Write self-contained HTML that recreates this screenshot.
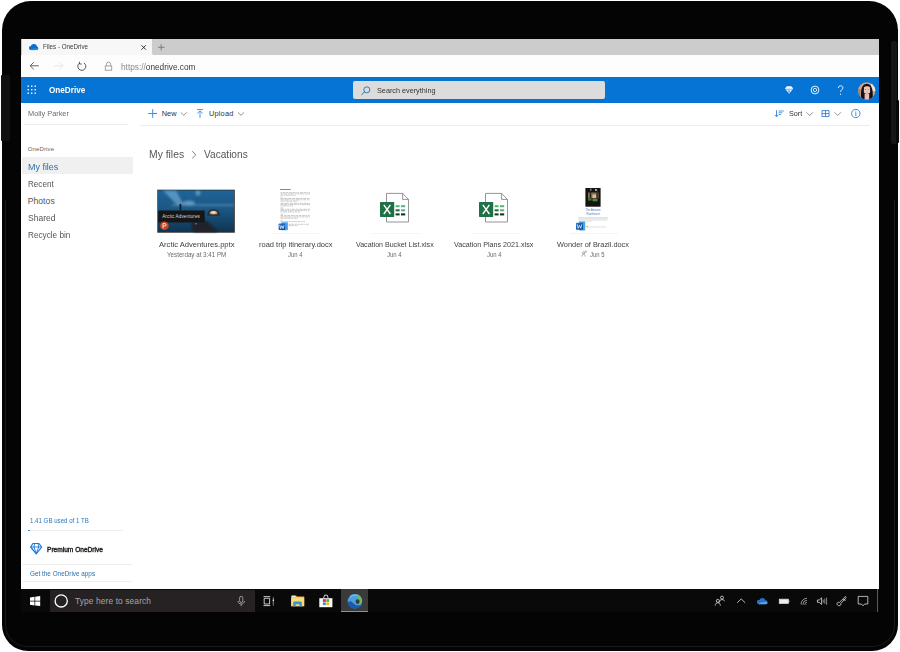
<!DOCTYPE html>
<html><head><meta charset="utf-8"><title>OneDrive</title>
<style>
html,body{margin:0;padding:0;width:900px;height:652px;overflow:hidden;background:#fff;}
body{position:relative;font-family:"Liberation Sans",sans-serif;}
.a{position:absolute;}
.t{position:absolute;white-space:nowrap;font-family:"Liberation Sans",sans-serif;}
svg{position:absolute;overflow:visible;}
</style></head><body>
<!-- device frame -->
<div class="a" style="left:2px;top:1px;width:896px;height:650px;background:#040404;border-radius:29px 29px 26px 26px;"></div>
<div class="a" style="left:5px;top:200px;width:888px;height:446px;border:1px solid #1a1a1a;border-top:none;border-radius:0 0 22px 22px;"></div>
<div class="a" style="left:891px;top:41px;width:6px;height:103px;background:#161616;border-radius:2px;"></div>
<div class="a" style="left:896px;top:100px;width:3px;height:43px;background:#080808;border-radius:1px;"></div>
<div class="a" style="left:1px;top:75px;width:9px;height:66px;background:#0f0f0f;border-radius:1px;"></div>

<!-- screen -->
<div class="a" style="left:21px;top:39px;width:858px;height:550px;background:#fff;"></div>
<!-- tab strip -->
<div class="a" style="left:21px;top:39px;width:858px;height:16px;background:#f7f7f7;"></div>
<div class="a" style="left:152px;top:39px;width:727px;height:16px;background:#cccccc;border-bottom-left-radius:2px;"></div>
<div class="a" style="left:21px;top:39px;width:1px;height:16px;background:#c4c4c4;"></div>
<!-- address row -->
<div class="a" style="left:21px;top:55px;width:858px;height:22px;background:#fdfdfd;"></div>
<!-- header -->
<div class="a" style="left:21px;top:77px;width:858px;height:25.5px;background:#0574d4;"></div>
<!-- search box -->
<div class="a" style="left:353px;top:81px;width:252px;height:18px;background:#dcdcdc;border-radius:2px;"></div>

<!-- nav highlight -->
<div class="a" style="left:22px;top:157px;width:111px;height:17px;background:#f0f0f0;"></div>
<!-- dividers -->
<div class="a" style="left:24px;top:124px;width:104px;height:1px;background:#ececec;"></div>
<div class="a" style="left:140px;top:125px;width:730px;height:1px;background:#eeeeee;"></div>
<div class="a" style="left:28px;top:530px;width:95px;height:1px;background:#eeeeee;"></div>
<div class="a" style="left:28px;top:530px;width:2px;height:1px;background:#3a86d0;"></div>
<div class="a" style="left:22px;top:564px;width:110px;height:1px;background:#efefef;"></div>
<div class="a" style="left:22px;top:581px;width:110px;height:1px;background:#efefef;"></div>

<!-- taskbar -->
<div class="a" style="left:21px;top:589px;width:858px;height:23px;background:#090909;"></div>
<div class="a" style="left:50px;top:590px;width:205px;height:22px;background:#262223;"></div>
<div class="a" style="left:341px;top:589px;width:27px;height:23px;background:#3a3a3a;"></div>
<div class="a" style="left:341px;top:611px;width:27px;height:1px;background:#4aa3e6;"></div>
<div class="a" style="left:877px;top:589px;width:1px;height:23px;background:#5a5a5a;"></div>

<!-- faint thumbnail base lines -->
<div class="a" style="left:272px;top:233px;width:48px;height:1px;background:#f4f4f4;"></div>
<div class="a" style="left:372px;top:233px;width:48px;height:1px;background:#f4f4f4;"></div>
<div class="a" style="left:471px;top:233px;width:48px;height:1px;background:#f4f4f4;"></div>
<div class="a" style="left:570px;top:233px;width:48px;height:1px;background:#f4f4f4;"></div>
<div class='t' style='left:43.00px;top:44.24px;font-size:6.8px;line-height:6.8px;color:#3a3a3a;font-weight:400;letter-spacing:0.000px;transform:scaleX(0.9163);transform-origin:0 0;'>Files - OneDrive</div>
<div class='t' style='left:120.60px;top:62.92px;font-size:8.6px;line-height:8.6px;color:#3a3a3a;font-weight:400;letter-spacing:0.000px;transform:scaleX(0.9614);transform-origin:0 0;'><span style='color:#8a8a8a'>https://</span>onedrive.com</div>
<div class='t' style='left:49.40px;top:86.19px;font-size:8.4px;line-height:8.4px;color:#ffffff;font-weight:700;letter-spacing:0.000px;transform:scaleX(0.9745);transform-origin:0 0;'>OneDrive</div>
<div class='t' style='left:377.00px;top:87.12px;font-size:7.3px;line-height:7.3px;color:#333;font-weight:400;letter-spacing:0.000px;transform:scaleX(0.9944);transform-origin:0 0;'>Search everything</div>
<div class='t' style='left:27.70px;top:110.40px;font-size:7.8px;line-height:7.8px;color:#6b6b6b;font-weight:400;letter-spacing:0.000px;transform:scaleX(0.9440);transform-origin:0 0;'>Molly Parker</div>
<div class='t' style='left:161.70px;top:110.34px;font-size:7.4px;line-height:7.4px;color:#333;font-weight:400;letter-spacing:0.052px;'>New</div>
<div class='t' style='left:209.00px;top:110.34px;font-size:7.4px;line-height:7.4px;color:#333;font-weight:400;letter-spacing:0.176px;'>Upload</div>
<div class='t' style='left:788.50px;top:110.44px;font-size:7.4px;line-height:7.4px;color:#333;font-weight:400;letter-spacing:0.000px;transform:scaleX(0.9733);transform-origin:0 0;'>Sort</div>
<div class='t' style='left:27.70px;top:146.12px;font-size:6.0px;line-height:6.0px;color:#666;font-weight:400;letter-spacing:0.137px;'>OneDrive</div>
<div class='t' style='left:27.70px;top:162.68px;font-size:9.0px;line-height:9.0px;color:#2a6fae;font-weight:400;letter-spacing:0.000px;transform:scaleX(0.9929);transform-origin:0 0;'>My files</div>
<div class='t' style='left:27.70px;top:179.72px;font-size:8.6px;line-height:8.6px;color:#555;font-weight:400;letter-spacing:0.000px;transform:scaleX(0.9437);transform-origin:0 0;'>Recent</div>
<div class='t' style='left:27.70px;top:197.02px;font-size:8.6px;line-height:8.6px;color:#555;font-weight:400;letter-spacing:0.047px;'>Photos</div>
<div class='t' style='left:27.70px;top:214.12px;font-size:8.6px;line-height:8.6px;color:#555;font-weight:400;letter-spacing:0.000px;transform:scaleX(0.9921);transform-origin:0 0;'>Shared</div>
<div class='t' style='left:27.70px;top:231.42px;font-size:8.6px;line-height:8.6px;color:#555;font-weight:400;letter-spacing:0.000px;transform:scaleX(0.9522);transform-origin:0 0;'>Recycle bin</div>
<div class='t' style='left:148.70px;top:149.36px;font-size:10.8px;line-height:10.8px;color:#565656;font-weight:400;letter-spacing:0.000px;transform:scaleX(0.9592);transform-origin:0 0;'>My files</div>
<div class='t' style='left:204.00px;top:149.36px;font-size:10.8px;line-height:10.8px;color:#565656;font-weight:400;letter-spacing:0.000px;transform:scaleX(0.9373);transform-origin:0 0;'>Vacations</div>
<div class='t' style='left:158.50px;top:241.20px;font-size:7.8px;line-height:7.8px;color:#404040;font-weight:400;letter-spacing:0.000px;transform:scaleX(0.9732);transform-origin:0 0;'>Arctic Adventures.pptx</div>
<div class='t' style='left:258.50px;top:241.20px;font-size:7.8px;line-height:7.8px;color:#404040;font-weight:400;letter-spacing:0.000px;transform:scaleX(0.9600);transform-origin:0 0;'>road trip itinerary.docx</div>
<div class='t' style='left:355.60px;top:240.60px;font-size:7.8px;line-height:7.8px;color:#404040;font-weight:400;letter-spacing:0.000px;transform:scaleX(0.9069);transform-origin:0 0;'>Vacation Bucket List.xlsx</div>
<div class='t' style='left:453.90px;top:240.60px;font-size:7.8px;line-height:7.8px;color:#404040;font-weight:400;letter-spacing:0.000px;transform:scaleX(0.9163);transform-origin:0 0;'>Vacation Plans 2021.xlsx</div>
<div class='t' style='left:557.00px;top:240.60px;font-size:7.8px;line-height:7.8px;color:#404040;font-weight:400;letter-spacing:0.000px;transform:scaleX(0.9456);transform-origin:0 0;'>Wonder of Brazil.docx</div>
<div class='t' style='left:166.70px;top:252.17px;font-size:6.3px;line-height:6.3px;color:#6a6a6a;font-weight:400;letter-spacing:0.000px;transform:scaleX(0.9886);transform-origin:0 0;'>Yesterday at 3:41 PM</div>
<div class='t' style='left:287.80px;top:251.97px;font-size:6.3px;line-height:6.3px;color:#6a6a6a;font-weight:400;letter-spacing:0.000px;transform:scaleX(0.9412);transform-origin:0 0;'>Jun 4</div>
<div class='t' style='left:387.20px;top:251.77px;font-size:6.3px;line-height:6.3px;color:#6a6a6a;font-weight:400;letter-spacing:0.000px;transform:scaleX(0.9412);transform-origin:0 0;'>Jun 4</div>
<div class='t' style='left:486.50px;top:251.77px;font-size:6.3px;line-height:6.3px;color:#6a6a6a;font-weight:400;letter-spacing:0.000px;transform:scaleX(0.9412);transform-origin:0 0;'>Jun 4</div>
<div class='t' style='left:589.50px;top:251.77px;font-size:6.3px;line-height:6.3px;color:#6a6a6a;font-weight:400;letter-spacing:0.000px;transform:scaleX(0.9412);transform-origin:0 0;'>Jun 5</div>
<div class='t' style='left:30.20px;top:517.81px;font-size:6.6px;line-height:6.6px;color:#2a78c2;font-weight:400;letter-spacing:0.000px;transform:scaleX(0.9290);transform-origin:0 0;'>1.41 GB used of 1 TB</div>
<div class='t' style='left:47.00px;top:546.27px;font-size:7.0px;line-height:7.0px;color:#222;font-weight:400;letter-spacing:0.000px;-webkit-text-stroke:0.4px #222;transform:scaleX(0.9392);transform-origin:0 0;'>Premium OneDrive</div>
<div class='t' style='left:29.70px;top:570.66px;font-size:6.9px;line-height:6.9px;color:#2a6fae;font-weight:400;letter-spacing:0.000px;transform:scaleX(0.9236);transform-origin:0 0;'>Get the OneDrive apps</div>
<div class='t' style='left:75.00px;top:596.79px;font-size:8.4px;line-height:8.4px;color:#a6a6a6;font-weight:400;letter-spacing:0.109px;'>Type here to search</div>
<svg width="900" height="652" viewBox="0 0 900 652" style="left:0;top:0">
<defs>
 <linearGradient id="sky" x1="0" y1="0" x2="0" y2="1">
  <stop offset="0" stop-color="#1f6396"/><stop offset="0.45" stop-color="#1b5784"/><stop offset="1" stop-color="#0f3552"/>
 </linearGradient>
 <radialGradient id="tent" cx="0.5" cy="0.5" r="0.5">
  <stop offset="0" stop-color="#fbeee0"/><stop offset="0.55" stop-color="#d8b698"/><stop offset="1" stop-color="#5a4a40"/>
 </radialGradient>
 <linearGradient id="wordg" x1="0" y1="0" x2="1" y2="1">
  <stop offset="0" stop-color="#2b7cd3"/><stop offset="1" stop-color="#103f91"/>
 </linearGradient>
 <linearGradient id="edgeg" x1="0" y1="0" x2="1" y2="1">
  <stop offset="0" stop-color="#5fb6e8"/><stop offset="0.6" stop-color="#2f8fd0"/><stop offset="1" stop-color="#1a5fae"/>
 </linearGradient>
 <filter id="bl"><feGaussianBlur stdDeviation="1.2"/></filter>
 <filter id="bl2"><feGaussianBlur stdDeviation="0.5"/></filter>
</defs>

<!-- tab cloud -->
<g fill="#0a6fd0">
<circle cx="30.9" cy="48.1" r="2"/><circle cx="33.9" cy="46.9" r="3"/><circle cx="36.3" cy="48.2" r="1.9"/>
<rect x="30.9" y="47" width="5.4" height="3.1"/>
</g>
<path d="M30.2,50.1 C30.8,48.8 32.5,48.4 33.8,48.6 C35,47.6 37.6,47.7 38.2,49 C38,49.7 37.3,50.1 36.3,50.1 Z" fill="#2f8ade" opacity="0.8"/>
<!-- tab close -->
<path d="M141.5,45.2 L145.9,49.7 M145.9,45.2 L141.5,49.7" stroke="#222" stroke-width="0.9" fill="none"/>
<!-- new tab plus -->
<path d="M161.2,44.2 V50.4 M158,47.3 H164.5" stroke="#777" stroke-width="0.9" fill="none"/>

<!-- back arrow -->
<path d="M30.2,65.8 H38.8 M33.8,62.2 L30.2,65.8 L33.8,69.4" stroke="#555" stroke-width="0.9" fill="none"/>
<!-- forward arrow (disabled) -->
<path d="M54,65.8 H63 M59.4,62.2 L63,65.8 L59.4,69.4" stroke="#e4e4e4" stroke-width="0.9" fill="none"/>
<!-- refresh -->
<path d="M79.2,63.3 A4,4 0 1 0 84,63" stroke="#444" stroke-width="0.9" fill="none"/>
<path d="M79.5,61.8 V64 H81.7" stroke="#444" stroke-width="0.9" fill="none"/>
<!-- lock -->
<path d="M106.4,66 V64.2 A2.1,2.1 0 0 1 110.6,64.2 V66" stroke="#999" stroke-width="0.9" fill="none"/>
<rect x="105.3" y="66" width="6.4" height="4.2" stroke="#999" stroke-width="0.9" fill="none"/>

<!-- waffle -->
<g fill="#fff">
 <rect x="27.5" y="85.5" width="1.4" height="1.4"/><rect x="31" y="85.5" width="1.4" height="1.4"/><rect x="34.5" y="85.5" width="1.4" height="1.4"/>
 <rect x="27.5" y="89" width="1.4" height="1.4"/><rect x="31" y="89" width="1.4" height="1.4"/><rect x="34.5" y="89" width="1.4" height="1.4"/>
 <rect x="27.5" y="92.5" width="1.4" height="1.4"/><rect x="31" y="92.5" width="1.4" height="1.4"/><rect x="34.5" y="92.5" width="1.4" height="1.4"/>
</g>
<!-- search icon -->
<circle cx="366.8" cy="89.8" r="3" stroke="#2a6cae" stroke-width="0.9" fill="none"/>
<path d="M364.7,91.9 L361.5,94.8" stroke="#2a6cae" stroke-width="1" fill="none"/>

<!-- header diamond -->
<path d="M786.8,86.3 H791.4 L793.2,88.6 L789.1,93.8 L785,88.6 Z" fill="#fff"/>
<path d="M785.6,89.2 H792.6 M788.1,89.6 L789.1,92.6 L790.1,89.6" stroke="#0574d4" stroke-width="0.55" fill="none"/>
<!-- gear -->
<circle cx="815" cy="90" r="3.9" stroke="#fff" stroke-width="0.9" fill="none"/>
<circle cx="815" cy="90" r="1.7" stroke="#fff" stroke-width="0.8" fill="none"/>
<!-- question -->
<path d="M838.4,88 C838.4,86.5 839.4,85.8 840.6,85.8 C841.9,85.8 842.9,86.7 842.9,87.9 C842.9,89.6 840.6,89.8 840.6,91.9" stroke="#fff" stroke-width="0.9" fill="none"/>
<circle cx="840.6" cy="94.2" r="0.6" fill="#fff"/>
<!-- avatar -->
<clipPath id="avc"><circle cx="866.7" cy="90.9" r="8.6"/></clipPath>
<g clip-path="url(#avc)">
 <rect x="858" y="82" width="18" height="18" fill="#d9a084"/>
 <rect x="871" y="83" width="5" height="8" fill="#eae6da"/>
 <rect x="858" y="89" width="2.5" height="7" fill="#8f8a78"/>
 <g filter="url(#bl2)">
 <path d="M861.2,99.5 C860.5,92 860.8,84.2 866.8,83.8 C872.8,84.2 873.2,92 872.6,99.5 Z" fill="#161010"/>
 <path d="M864,87.5 C864.5,85.8 869.5,85.8 870,87.5 L870.2,92 C869.8,94.5 864.2,94.5 863.8,92 Z" fill="#e8c4b2"/>
 <rect x="864.6" y="94" width="4.6" height="6" fill="#e6bcc0"/>
 <circle cx="865.6" cy="89.6" r="0.45" fill="#402820"/><circle cx="868.2" cy="89.6" r="0.45" fill="#402820"/>
 </g>
</g>

<!-- toolbar: plus -->
<path d="M152.7,109.2 V117.8 M148.3,113.5 H157" stroke="#3b8fe0" stroke-width="1" fill="none"/>
<path d="M180.8,112.4 L183.8,115.3 L186.8,112.4" stroke="#777" stroke-width="0.8" fill="none"/>
<!-- upload -->
<path d="M197,109.5 H203 M200,118 V110.8 M197.3,113.5 L200,110.8 L202.7,113.5" stroke="#3b8fe0" stroke-width="0.9" fill="none"/>
<path d="M238,112.4 L241,115.3 L244,112.4" stroke="#777" stroke-width="0.8" fill="none"/>
<!-- sort -->
<path d="M776.5,110.3 V116.6 M774.9,115 L776.5,116.8 L778.1,115" stroke="#2f7fd1" stroke-width="0.9" fill="none"/>
<path d="M778.6,111 H783.8 M778.6,112.8 H782.4 M778.6,114.6 H781" stroke="#2f7fd1" stroke-width="0.8" fill="none"/>
<path d="M806.5,112.3 L809.7,115.5 L812.9,112.3" stroke="#777" stroke-width="0.8" fill="none"/>
<!-- grid -->
<path d="M822,110.6 H829 V116.6 H822 Z M825.5,110.6 V116.6 M822,113.6 H829" stroke="#2f7fd1" stroke-width="0.9" fill="none"/>
<path d="M834.5,112.3 L837.7,115.5 L840.9,112.3" stroke="#777" stroke-width="0.8" fill="none"/>
<!-- info -->
<circle cx="855.8" cy="113.5" r="4.2" stroke="#2f7fd1" stroke-width="0.9" fill="none"/>
<path d="M855.8,112.3 V116" stroke="#2f7fd1" stroke-width="0.9"/>
<circle cx="855.8" cy="110.9" r="0.5" fill="#2f7fd1"/>

<!-- breadcrumb chevron -->
<path d="M192.2,151.2 L195.8,154.8 L192.2,158.4" stroke="#666" stroke-width="0.8" fill="none"/>

<!-- pptx thumbnail -->
<rect x="157.3" y="189.7" width="77.5" height="43" fill="#2a2a2a"/>
<rect x="158" y="190.4" width="76" height="41.6" fill="url(#sky)"/>
<g filter="url(#bl)">
 <path d="M163,190.5 L176,190.5 L184,205 L177,205 Z" fill="#80bce6" opacity="0.55"/>
 <ellipse cx="189" cy="203" rx="6" ry="2.5" fill="#93c4e6" opacity="0.55"/>
 <ellipse cx="198" cy="193" rx="2.5" ry="2.5" fill="#a4cbe4" opacity="0.5"/>
 <rect x="172" y="204" width="62" height="2.2" fill="#6aa2c8" opacity="0.45"/>
 <path d="M191,223.5 L207,221.5 L217.5,232 L194,232 Z" fill="#1d2026" opacity="0.95"/>
</g>
<path d="M191,223.5 L207,221.5 L217.5,232 L194,232 Z" fill="#25272c" opacity="0.6"/>
<g filter="url(#bl2)">
<path d="M207.2,215.5 C207.5,207 219.5,207 219.8,215.5 Z" fill="#262626"/>
<path d="M208.8,214.8 C209.3,208.8 217.8,208.8 218.2,214.8 Z" fill="url(#tent)"/>
</g>
<rect x="179.6" y="205" width="1.7" height="5.5" fill="#0e1a24"/>
<circle cx="180.4" cy="204.6" r="0.9" fill="#0e1a24"/>
<rect x="158.2" y="210.5" width="46.5" height="12" fill="#161616"/>
<text x="162.2" y="218.3" font-family="Liberation Sans" font-size="4.6" fill="#d8d8d8" letter-spacing="0.12">Arctic Adventures</text>
<circle cx="164.4" cy="225.8" r="4.3" fill="#c94522"/>
<path d="M163,228.4 V223.6 H165 C166.5,223.6 166.5,226 165,226 H163" stroke="#fff" stroke-width="0.8" fill="none"/>
<circle cx="196" cy="223.8" r="0.8" fill="#d8609a"/>
<!-- docx page thumbnail -->
<path d="M280,189.5 H290.8" stroke="#555" stroke-width="0.7"/>
<path d="M280.5,192.6h1.7M282.9,192.6h2.6M286.2,192.6h2.1M289.1,192.6h2.8M292.6,192.6h2.9M296.1,192.6h1.2M298.0,192.6h1.0M299.8,192.6h3.5M304.0,192.6h1.8M306.5,192.6h1.7M308.9,192.6h1.1M280.5,193.9h2.4M283.6,193.9h3.5M287.8,193.9h2.4M290.9,193.9h2.9M294.6,193.9h1.5M296.7,193.9h2.9M300.3,193.9h3.6M304.6,193.9h2.6M307.9,193.9h2.1M280.5,195.2h3.0M284.2,195.2h1.2M286.1,195.2h3.3M290.1,195.2h2.8M293.6,195.2h1.9M280.5,197.2h1.1M282.3,197.2h0.7M280.5,198.5h2.4M283.6,198.5h3.2M287.5,198.5h3.6M291.8,198.5h3.1M295.7,198.5h3.8M300.1,198.5h2.2M303.0,198.5h3.4M307.1,198.5h2.3M280.5,199.8h3.8M285.0,199.8h3.6M289.3,199.8h1.3M291.3,199.8h1.4M293.4,199.8h1.7M295.8,199.8h3.9M300.4,199.8h2.3M303.4,199.8h2.9M307.0,199.8h1.9M309.6,199.8h0.4M280.5,201.1h2.2M283.4,201.1h2.1M286.1,201.1h2.8M289.6,201.1h2.8M293.0,201.1h3.7M297.4,201.1h0.6M280.5,203.3h3.8M285.0,203.3h3.6M289.3,203.3h4.0M293.9,203.3h3.0M297.6,203.3h1.5M299.8,203.3h3.6M304.1,203.3h3.9M308.7,203.3h1.3M280.5,204.6h2.7M283.9,204.6h3.1M287.7,204.6h1.6M290.1,204.6h3.5M294.3,204.6h2.7M297.7,204.6h1.9M300.3,204.6h1.2M302.1,204.6h3.6M306.4,204.6h3.6M280.5,205.9h1.3M282.5,205.9h3.4M286.6,205.9h2.2M289.5,205.9h1.5M291.7,205.9h1.3M280.5,208h2.5M280.5,209.3h3.6M284.8,209.3h1.1M286.7,209.3h2.8M290.2,209.3h1.1M292.0,209.3h3.2M295.9,209.3h2.0M298.6,209.3h3.6M302.9,209.3h3.9M307.6,209.3h2.4M280.5,210.6h4.0M285.2,210.6h1.9M287.8,210.6h1.2M289.8,210.6h2.8M293.3,210.6h1.1M295.0,210.6h1.6M297.3,210.6h2.2M300.3,210.6h2.8M303.8,210.6h1.5M306.0,210.6h1.1M307.8,210.6h1.2M280.5,211.9h1.9M283.1,211.9h3.9M287.7,211.9h3.7M292.1,211.9h2.1M294.9,211.9h2.4M298.0,211.9h2.0M280.5,214.3h2.5M280.5,215.6h2.8M284.0,215.6h2.7M287.4,215.6h2.9M290.9,215.6h3.8M295.4,215.6h2.5M298.7,215.6h2.3M301.7,215.6h3.2M305.5,215.6h1.7M307.9,215.6h1.9M280.5,216.9h3.9M285.1,216.9h2.6M288.4,216.9h2.6M291.7,216.9h1.0M293.5,216.9h2.2M296.4,216.9h2.7M299.9,216.9h1.1M301.6,216.9h2.8M305.2,216.9h2.9M308.8,216.9h1.2M280.5,218.2h2.9M284.1,218.2h2.4M287.2,218.2h3.0M290.9,218.2h2.1M293.7,218.2h3.1M297.5,218.2h0.5M280.5,220.3h1.1M282.3,220.3h0.7M280.5,221.6h3.0M284.2,221.6h3.9M288.8,221.6h1.8M291.3,221.6h2.4M294.3,221.6h2.8M297.8,221.6h2.0M300.5,221.6h2.1M303.3,221.6h1.7M288.5,224.3h2.1M291.3,224.3h2.8M294.8,224.3h1.9M297.4,224.3h2.1M300.2,224.3h3.3M304.2,224.3h1.1M306.0,224.3h2.7M288.5,225.6h3.2M292.4,225.6h1.9M295.0,225.6h1.7M297.4,225.6h0.6" stroke="#a4a4a4" stroke-width="0.6"/>
<rect x="281.3" y="222.2" width="6.6" height="8" rx="0.8" fill="#41a5ee"/>
<rect x="278.6" y="223.4" width="6.6" height="6.6" rx="0.8" fill="url(#wordg)"/>
<path d="M279.7,224.9 L280.7,228.6 L281.9,225.8 L283.1,228.6 L284.1,224.9" stroke="#fff" stroke-width="0.7" fill="none"/>

<!-- excel icons -->
<g id="xl">
 <path d="M386.5,193.4 H402.6 L408.5,199.4 V222 H386.5 Z" fill="#fff" stroke="#7a7a7a" stroke-width="0.8"/>
 <path d="M402.6,193.4 V199.4 H408.5" fill="none" stroke="#7a7a7a" stroke-width="0.8"/>
 <rect x="380" y="201.9" width="14.2" height="15" rx="0.6" fill="#1e7145"/>
 <path d="M383.8,204.8 L390.4,214 M390.4,204.8 L383.8,214" stroke="#fff" stroke-width="1.4" fill="none"/>
 <rect x="395.6" y="205.2" width="4" height="2" fill="#52b57a"/><rect x="401" y="205.2" width="4.2" height="2" fill="#52b57a"/>
 <rect x="395.6" y="209.3" width="4" height="2" fill="#1f6b3e"/><rect x="401" y="209.3" width="4.2" height="2" fill="#52b57a"/>
 <rect x="395.6" y="213.4" width="4" height="2" fill="#0f3a22"/><rect x="401" y="213.4" width="4.2" height="2" fill="#0f2a1c"/>
</g>
<use href="#xl" x="99" y="0"/>

<!-- wonder of brazil docx -->
<rect x="585.4" y="188" width="15.2" height="18.7" fill="#141412"/>
<g filter="url(#bl2)">
 <rect x="590" y="188.8" width="1.5" height="2" fill="#6f90b0"/>
 <rect x="595" y="189" width="2" height="2" fill="#a8b4bc"/>
 <rect x="588" y="192.5" width="10.5" height="6" fill="#8a7058"/>
 <rect x="592.5" y="194.5" width="3.5" height="3.5" fill="#d8bca4"/>
 <rect x="589.8" y="190.5" width="1.4" height="8" fill="#2a201a"/>
 <rect x="596.5" y="190" width="1.4" height="9" fill="#3a2e26"/>
 <rect x="588" y="198.4" width="3.5" height="2.2" fill="#3a7a28"/>
 <rect x="592.5" y="199" width="5" height="2.3" fill="#468e2c"/>
</g>
<text x="593" y="211.2" text-anchor="middle" font-family="Liberation Sans" font-size="2.9" fill="#4a78b8" textLength="15" lengthAdjust="spacingAndGlyphs">The Amazon</text>
<text x="593" y="215" text-anchor="middle" font-family="Liberation Sans" font-size="2.9" fill="#4a78b8" textLength="13.5" lengthAdjust="spacingAndGlyphs">Rainforest</text>
<g stroke="#c2c2c2" stroke-width="0.5">
 <path d="M578.5,217.6 H608 M578.5,218.8 H608 M578.5,220 H607 M578.5,221.2 H592"/>
 <path d="M586.5,227 H606"/>
</g>
<rect x="579" y="221.6" width="6.2" height="9" rx="0.8" fill="#41a5ee"/>
<rect x="576" y="222.8" width="7" height="7" rx="0.8" fill="url(#wordg)"/>
<path d="M577.2,224.4 L578.2,228.3 L579.5,225.4 L580.8,228.3 L581.8,224.4" stroke="#fff" stroke-width="0.7" fill="none"/>
<path d="M586,226.5 H588" stroke="#9bc83c" stroke-width="0.9"/>
<!-- shared icon -->
<circle cx="583.6" cy="252.9" r="1.1" stroke="#777" stroke-width="0.6" fill="none"/>
<path d="M582,256.6 C582,254.8 583,254.2 583.6,254.2 C584.3,254.2 585.2,254.8 585.2,256.6" stroke="#777" stroke-width="0.6" fill="none"/>
<circle cx="585.8" cy="251.6" r="0.8" stroke="#777" stroke-width="0.5" fill="none"/>

<!-- premium diamond -->
<path d="M32.9,543.5 H38.9 L41.7,547 L36.3,553.8 L30.7,547 Z" stroke="#1a78d6" stroke-width="1.2" fill="none" stroke-linejoin="round"/>
<path d="M30.8,547 H41.6 M34.6,543.6 L33.9,547 L36.3,553.4 L38.7,547 L38,543.6" stroke="#1a78d6" stroke-width="0.9" fill="none"/>

<!-- taskbar: windows logo -->
<g fill="#fff">
 <path d="M30,597.5 L34.5,596.8 V600.8 H30 Z"/>
 <path d="M35.2,596.7 L40.2,596 V600.8 H35.2 Z"/>
 <path d="M30,601.4 H34.5 V605.4 L30,604.8 Z"/>
 <path d="M35.2,601.4 H40.2 V606.1 L35.2,605.5 Z"/>
</g>
<!-- cortana -->
<circle cx="61.2" cy="600.9" r="6.1" stroke="#fff" stroke-width="1.3" fill="none"/>
<!-- mic -->
<rect x="239.6" y="596.3" width="3.2" height="6.2" rx="1.6" stroke="#b0b0b0" stroke-width="0.8" fill="none"/>
<path d="M238,601 C238,605 244.4,605 244.4,601 M241.2,604 V606.2" stroke="#b0b0b0" stroke-width="0.8" fill="none"/>
<!-- task view -->
<path d="M263.5,596.6 H270.3 M263.5,605.6 H270.3 M264.2,598.3 H269.6 V604 H264.2 Z" stroke="#ddd" stroke-width="0.9" fill="none"/>
<path d="M273.3,597.2 V605.6" stroke="#999" stroke-width="0.9"/>
<circle cx="273.3" cy="600.2" r="0.7" fill="#fff"/>
<!-- explorer -->
<path d="M291.2,595.4 H296 L297,596.6 H304.2 V606.2 H291.2 Z" fill="#e9a83c"/>
<rect x="292" y="595.8" width="3.5" height="1.2" fill="#f4f0e0"/>
<path d="M291.2,597.4 H304.2 V606.2 H291.2 Z" fill="#f9dc7c"/>
<path d="M293.2,606.4 V602.4 Q293.2,601.4 294.2,601.4 H300.8 Q301.8,601.4 301.8,602.4 V606.4 H299.4 V604.2 H295.6 V606.4 Z" fill="#3d8fd6"/>
<!-- store -->
<path d="M319.3,598.2 H332.4 V607.2 H319.3 Z" fill="#fafafa"/>
<path d="M323.6,598.2 L324.6,595.2 H327.2 L328.2,598.2" stroke="#e8e8e8" stroke-width="0.9" fill="none"/>
<rect x="322.9" y="599.2" width="2.9" height="2.7" fill="#e8262a"/>
<rect x="326.3" y="599.2" width="2.9" height="2.7" fill="#5bab3a"/>
<rect x="322.9" y="602.4" width="2.9" height="2.7" fill="#2a96d8"/>
<rect x="326.3" y="602.4" width="2.9" height="2.7" fill="#f7b718"/>
<!-- edge -->
<circle cx="354.9" cy="601.3" r="7.2" fill="#4aa0dc"/>
<path d="M350,596 C352,594.2 357,593.6 360,596.5 C356,595.5 351.5,596 350,598 Z" fill="#7ec4ee" opacity="0.7"/>
<path d="M356.5,594.2 C360,594.8 362.2,597.8 362.1,601 C362,603.6 360.2,604.6 358.4,604.4 C360.2,602.6 359.8,599.2 357,598 C358,597 357.5,595.2 356.5,594.2 Z" fill="#6dbb5e"/>
<path d="M347.7,602 C348.2,606 351.3,608.5 355,608.5 C358.2,608.5 361,606.6 362,604.4 C359,606 355.5,605.6 353.5,603.4 C352,601.7 351,600.2 347.7,602 Z" fill="#1d58aa"/>
<ellipse cx="357.6" cy="601.6" rx="2" ry="2.3" fill="#3a3a3a"/>
<!-- tray: people -->
<g stroke="#ddd" stroke-width="0.8" fill="none">
 <circle cx="722" cy="597.6" r="1.5"/>
 <path d="M719.4,602.5 C719.5,600.6 720.5,599.6 722,599.6 C723.5,599.6 724.5,600.4 724.6,601.2"/>
 <circle cx="717.8" cy="600.8" r="1.5"/>
 <path d="M715.2,605.6 C715.3,603.6 716.4,602.8 717.8,602.8 C719.2,602.8 720.3,603.6 720.4,605.6"/>
</g>
<!-- chevron up -->
<path d="M737.2,602.8 L741.2,598.9 L745.2,602.8" stroke="#ccc" stroke-width="0.9" fill="none"/>
<!-- tray onedrive -->
<g fill="#2a6fc8">
<circle cx="759.1" cy="602" r="2.2"/><circle cx="762.4" cy="600.9" r="2.9"/><circle cx="765.5" cy="602.2" r="2"/>
<rect x="759.1" y="601" width="6.4" height="3.2"/>
</g>
<path d="M758.6,604.2 C759.4,602.6 761.6,602.2 763.2,602.4 C764.6,601.4 767.2,601.6 767.6,603 C767.3,603.8 766.5,604.2 765.5,604.2 Z" fill="#4fa8e8"/>
<!-- battery -->
<rect x="779.3" y="599.2" width="9" height="4.2" stroke="#ddd" stroke-width="0.8" fill="#eee"/>
<rect x="788.5" y="600.5" width="0.9" height="1.6" fill="#ddd"/>
<!-- wifi -->
<g stroke="#ccc" stroke-width="0.7" fill="none">
 <path d="M801,604.3 A6,6 0 0 1 807,598.3"/>
 <path d="M803,604.3 A4,4 0 0 1 807,600.3"/>
 <path d="M805,604.3 A2,2 0 0 1 807,602.3"/>
</g>
<path d="M801,604.5 H807" stroke="#666" stroke-width="0.5"/>
<!-- volume -->
<path d="M817.4,600 H819.2 L821.6,597.8 V604.4 L819.2,602.3 H817.4 Z" stroke="#ddd" stroke-width="0.8" fill="none"/>
<path d="M823.2,599.6 V602.8 M824.8,598.5 V603.8 M826.6,597.6 V604.8" stroke="#bbb" stroke-width="0.7"/>
<!-- pen -->
<path d="M837.5,605 C836,603.5 837.8,601.5 839.3,602.6 L845.4,596.4 L846.2,597.6 L840.8,603.6 C841.5,605.5 838.8,606.5 837.5,605 Z M843,599.5 C844.6,600.2 845.8,600.6 846,599.8" stroke="#ddd" stroke-width="0.8" fill="none"/>
<!-- action center -->
<path d="M858.2,596.4 H867.8 V604 H864.6 L863,605.8 L861.4,604 H858.2 Z" stroke="#ddd" stroke-width="0.8" fill="none"/>
</svg>

</body></html>
